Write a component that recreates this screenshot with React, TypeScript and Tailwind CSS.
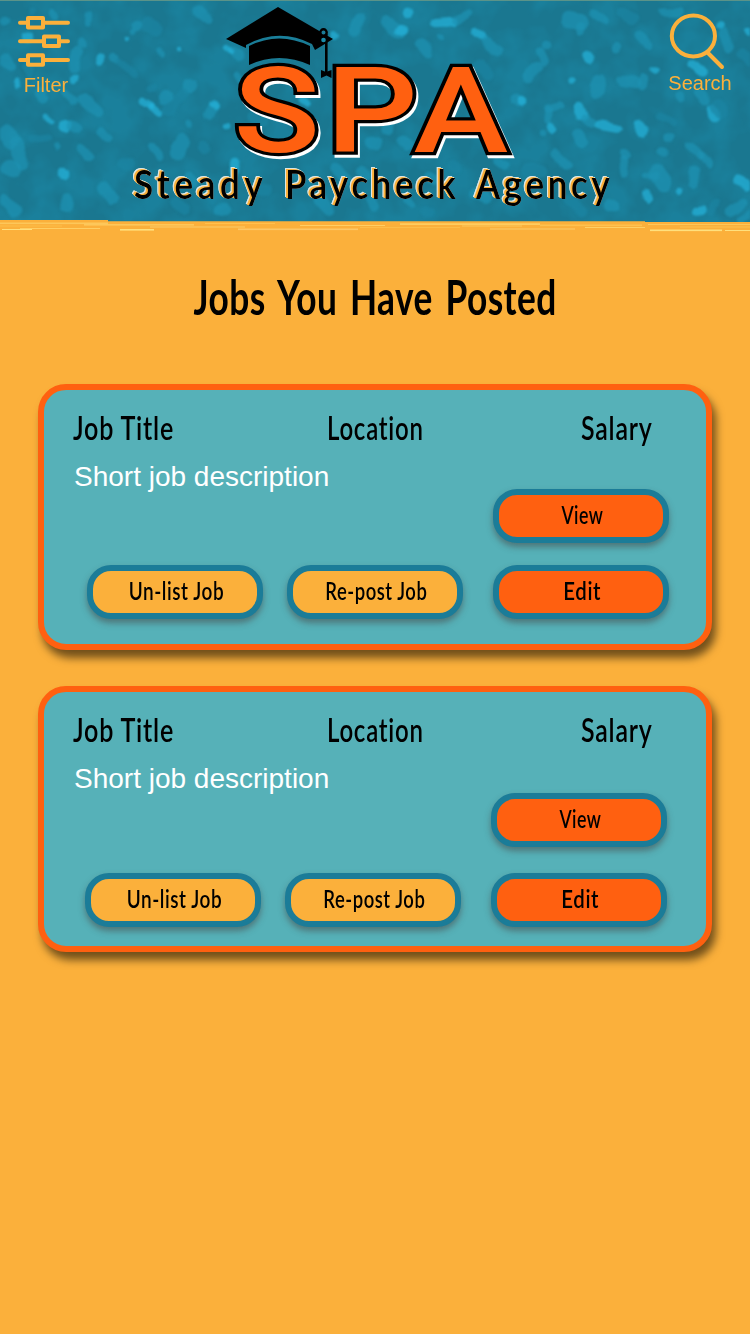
type Streak = [number, number, number, number, number, string];

const FAINT = '#1c85a3';
const MID = '#1e93b4';
const LIGHT = '#25b4dc';

const streaks: Streak[] = [
  [88, 14, 87, 24, 5, MID], [53, 13, 56, 15, 7, MID], [4, 21, 5, 22, 7, MID], [31, 12, 31, 12, 5, FAINT],
  [25, 35, 29, 36, 7, LIGHT], [81, 40, 82, 44, 6, MID], [99, 58, 99, 61, 8, LIGHT], [78, 52, 74, 68, 9, MID],
  [114, 58, 116, 59, 7, MID], [4, 60, 9, 66, 12, MID], [27, 66, 30, 71, 9, FAINT], [73, 79, 73, 79, 7, LIGHT],
  [66, 92, 74, 101, 7, MID], [41, 94, 43, 98, 9, MID], [16, 81, 18, 85, 3, LIGHT], [84, 98, 98, 111, 11, MID],
  [143, 101, 151, 105, 5, LIGHT], [152, 107, 159, 112, 6, LIGHT], [148, 24, 156, 28, 14, FAINT], [137, 26, 137, 26, 9, MID],
  [133, 32, 133, 32, 5, MID], [126, 40, 126, 40, 3, LIGHT], [198, 11, 206, 18, 10, MID], [120, 62, 134, 73, 6, FAINT],
  [159, 49, 161, 53, 4, MID], [179, 50, 179, 50, 3, LIGHT], [190, 85, 190, 85, 13, MID], [183, 92, 168, 110, 10, FAINT],
  [165, 96, 165, 98, 11, MID], [214, 108, 207, 116, 9, MID], [190, 124, 190, 124, 6, MID], [151, 89, 151, 89, 6, FAINT],
  [7, 131, 10, 140, 16, MID], [15, 145, 23, 163, 12, MID], [10, 168, 14, 170, 17, MID], [62, 126, 66, 127, 10, LIGHT],
  [71, 127, 76, 130, 8, MID], [46, 117, 50, 121, 3, LIGHT], [101, 132, 107, 138, 6, MID], [30, 140, 47, 138, 7, FAINT],
  [56, 146, 57, 148, 4, MID], [81, 148, 87, 158, 9, MID], [153, 147, 159, 157, 7, MID], [182, 140, 178, 153, 13, MID],
  [203, 147, 205, 149, 9, FAINT], [123, 163, 129, 164, 10, FAINT], [63, 174, 64, 175, 9, LIGHT], [67, 201, 66, 204, 12, MID],
  [103, 187, 113, 199, 9, MID], [4, 200, 15, 212, 9, MID], [176, 205, 184, 208, 11, FAINT], [189, 178, 192, 181, 9, MID],
  [211, 198, 214, 195, 9, FAINT], [234, 52, 237, 54, 9, MID], [227, 50, 230, 51, 5, LIGHT], [214, 104, 216, 107, 6, LIGHT],
  [360, 19, 354, 31, 10, MID], [408, 12, 408, 12, 7, LIGHT], [385, 21, 401, 33, 9, MID], [401, 30, 403, 31, 9, LIGHT],
  [436, 22, 454, 21, 7, LIGHT], [457, 19, 467, 14, 8, MID], [420, 42, 427, 52, 9, MID], [333, 35, 334, 36, 6, LIGHT],
  [475, 34, 481, 36, 9, LIGHT], [486, 42, 498, 50, 9, MID], [440, 38, 440, 38, 6, MID], [480, 64, 487, 75, 10, FAINT],
  [515, 98, 521, 102, 11, MID], [226, 126, 226, 126, 5, LIGHT], [239, 75, 241, 79, 5, MID], [253, 117, 263, 121, 10, FAINT],
  [293, 141, 308, 127, 9, MID], [302, 101, 306, 105, 6, LIGHT], [389, 113, 387, 130, 10, MID], [401, 141, 408, 146, 8, MID],
  [371, 142, 376, 143, 11, MID], [234, 165, 235, 170, 9, LIGHT], [219, 209, 225, 208, 11, MID], [255, 187, 267, 190, 10, FAINT],
  [335, 167, 346, 180, 9, MID], [361, 171, 367, 174, 9, MID], [293, 174, 311, 183, 9, FAINT], [319, 199, 329, 210, 10, MID],
  [372, 201, 374, 206, 10, MID], [429, 176, 435, 180, 9, MID], [453, 166, 455, 168, 9, FAINT], [475, 193, 487, 197, 10, MID],
  [425, 209, 430, 212, 8, FAINT], [498, 161, 505, 166, 8, MID], [500, 139, 505, 148, 8, FAINT], [408, 202, 410, 205, 6, MID],
  [568, 20, 580, 22, 15, MID], [579, 28, 579, 31, 8, MID], [595, 13, 602, 20, 8, MID], [623, 12, 632, 18, 9, FAINT],
  [665, 13, 679, 13, 6, MID], [640, 36, 648, 45, 9, MID], [547, 45, 547, 45, 7, MID], [540, 52, 544, 61, 8, MID],
  [536, 66, 528, 78, 9, MID], [588, 55, 590, 58, 8, LIGHT], [616, 48, 616, 48, 9, MID], [572, 80, 572, 80, 6, LIGHT],
  [599, 80, 597, 91, 12, MID], [653, 70, 654, 70, 6, LIGHT], [622, 81, 635, 83, 9, MID], [641, 85, 644, 80, 7, MID],
  [720, 26, 720, 26, 6, LIGHT], [723, 33, 729, 47, 8, MID], [748, 30, 749, 32, 6, LIGHT], [692, 64, 703, 72, 8, LIGHT],
  [698, 91, 705, 102, 7, MID], [713, 110, 714, 117, 9, LIGHT], [679, 96, 680, 97, 9, MID], [523, 100, 523, 101, 9, LIGHT],
  [548, 109, 559, 106, 6, MID], [549, 111, 548, 121, 6, MID], [551, 128, 553, 130, 7, LIGHT], [579, 108, 582, 115, 9, LIGHT],
  [586, 119, 593, 124, 8, MID], [600, 125, 616, 128, 8, LIGHT], [638, 125, 643, 131, 9, LIGHT], [668, 137, 670, 137, 6, MID],
  [660, 117, 672, 122, 7, FAINT], [578, 135, 582, 142, 11, MID], [625, 153, 625, 154, 9, MID], [623, 159, 625, 172, 6, MID],
  [663, 152, 663, 152, 8, MID], [555, 154, 566, 165, 8, MID], [690, 147, 700, 154, 7, MID], [702, 154, 708, 164, 6, MID],
  [657, 173, 664, 183, 15, MID], [645, 175, 655, 175, 5, MID], [695, 171, 692, 185, 9, MID], [680, 192, 680, 192, 5, LIGHT],
  [645, 193, 650, 200, 6, LIGHT], [609, 206, 614, 206, 9, MID], [568, 200, 582, 212, 9, FAINT], [529, 168, 540, 172, 11, FAINT],
  [697, 211, 702, 210, 8, LIGHT], [738, 181, 747, 185, 8, LIGHT], [718, 107, 720, 110, 14, FAINT], [741, 54, 749, 61, 10, FAINT],
  [716, 203, 711, 213, 7, FAINT], [730, 213, 743, 202, 7, MID], [740, 219, 749, 214, 7, MID], [543, 133, 543, 133, 5, MID],
];

const brushLines: [number, number, number, string][] = [
  [0, 223, 108, '#fdc75a'], [0, 226, 62, '#fdbd49'], [20, 228.5, 80, '#ffce62'], [84, 224.5, 110, '#fdc75a'],
  [150, 227, 95, '#fccb68'], [205, 223.5, 70, '#ffc14e'], [238, 229, 120, '#fdc766'], [300, 225.5, 85, '#ffce62'],
  [360, 227.5, 100, '#fdbd49'], [400, 223.8, 140, '#ffd064'], [462, 226, 60, '#fdc75a'], [490, 229, 85, '#fdcb6b'],
  [540, 225, 102, '#ffc14e'], [585, 227.5, 60, '#ffd064'], [648, 224.5, 102, '#fdc75a'], [650, 230, 72, '#ffe07d'],
  [680, 227, 70, '#ffc14e'], [2, 229.5, 30, '#ffe07d'], [120, 229.5, 34, '#ffe07d'], [725, 230.5, 25, '#ffe07d'],
];

const letters = [
  { ch: 'S', x: 233.5, sx: 1.2 },
  { ch: 'P', x: 326, sx: 1.21 },
  { ch: 'A', x: 413.5, sx: 1.2 },
];

const tagline = [
  { word: 'Steady', x: 134, width: 129 },
  { word: 'Paycheck', x: 285, width: 171 },
  { word: 'Agency', x: 476, width: 134 },
];

function WaterBackdrop() {
  return (
    <svg className="absolute inset-0 h-[234px] w-[750px]" viewBox="0 0 750 234" aria-hidden="true">
      <defs>
        <filter id="organic" x="0" y="0" width="750" height="234" filterUnits="userSpaceOnUse" colorInterpolationFilters="sRGB">
          <feTurbulence type="fractalNoise" baseFrequency="0.06" numOctaves="1" seed="4" />
          <feDisplacementMap in="SourceGraphic" scale="9" xChannelSelector="R" yChannelSelector="G" />
          <feGaussianBlur stdDeviation="0.8" />
        </filter>
        <filter id="mottle" x="0" y="0" width="750" height="222" filterUnits="userSpaceOnUse" colorInterpolationFilters="sRGB">
          <feTurbulence type="fractalNoise" baseFrequency="0.03" numOctaves="3" seed="9" />
          <feColorMatrix values="0 0 0 0 0.11  0 0 0 0 0.55  0 0 0 0 0.67  3 0 0 0 -1.1" />
        </filter>
      </defs>
      <rect width="750" height="222" fill="#1a7790" />
      <rect width="750" height="222" filter="url(#mottle)" opacity="0.45" />
      <g filter="url(#organic)" strokeLinecap="round">
        {streaks.map(([x1, y1, x2, y2, w, c], i) => (
          <line key={i} x1={x1} y1={y1} x2={x2 + 0.1} y2={y2} strokeWidth={w + 1.5} stroke={c} opacity={0.7} />
        ))}
      </g>
      <rect width="750" height="1" fill="#5b9389" />
      <path d="M0 220H108V221.3H645V222H750V234H0Z" fill="#fbb03b" />
      {brushLines.map(([x, y, w, c], i) => (
        <rect key={i} x={x} y={y - 0.5} width={w} height={i % 3 === 0 ? 1.6 : 1} fill={c} />
      ))}
    </svg>
  );
}

function Logo() {
  return (
    <svg className="ml-[33px] mr-[25px] h-[222px] w-[500px] shrink-0" viewBox="125 0 500 222" role="img" aria-label="SPA">
      <g fill="#000">
        <path d="M278 7L333 39L315 50L312 44Q279 27 246 45V48L226 39Z" />
        <path d="M249 46Q279 31 310 46V65Q279 51 249 65Z" />
        <path d="M326.3 34V72" stroke="#000" strokeWidth="2.6" />
        <circle cx="323.5" cy="32.5" r="3.2" fill="#1b7c98" stroke="#000" strokeWidth="2.4" />
        <circle cx="323.5" cy="40" r="3" fill="#1b8caa" stroke="#000" strokeWidth="1.4" />
        <path d="M321 70L326 72L331.5 70V78L326.5 75.5L321 78Z" />
      </g>
      <g className="font-['Roboto',sans-serif] font-[490] [filter:drop-shadow(2.6px_3.8px_0_#fff)] [paint-order:stroke]" fontSize="119" fill="#ff6010" stroke="#000" strokeWidth="6.4" strokeLinejoin="miter">
        {letters.map((l) => (
          <text key={l.ch} transform={`translate(${l.x} 152.4) scale(${l.sx} 1)`}>{l.ch}</text>
        ))}
      </g>
      <g className="font-['Lato',sans-serif] font-semibold [filter:drop-shadow(-2px_-1px_0_#fbb03b)_drop-shadow(0.8px_0.8px_0_#dfe7e3)_drop-shadow(-0.8px_-0.8px_0_#dfe7e3)]" fontSize="41" fill="#000">
        {tagline.map((t) => (
          <text key={t.word} transform={`translate(${t.x} 199) scale(0.86 1)`} textLength={t.width / 0.86}>{t.word}</text>
        ))}
      </g>
    </svg>
  );
}

function Header() {
  return (
    <header className="relative h-[222px]">
      <WaterBackdrop />
      <div className="relative flex h-full font-['Liberation_Sans',sans-serif] text-[20px] leading-[24px] text-[#fbb03b]">
        <button className="flex h-[98px] w-[92px] shrink-0 flex-col items-center pt-[15px]">
          <svg className="ml-[-4px] h-[54px] w-[54px]" viewBox="0 0 54 54" fill="none" stroke="#fbb03b" strokeWidth="4" strokeLinecap="round">
            <path d="M3 7.7H11M27 7.7H51M3 26.3H27M44 26.3H51M3 45H11M27 45H51" />
            <g strokeLinejoin="round">
              <rect x="11" y="3" width="15" height="9.5" />
              <rect x="27" y="21.6" width="15" height="9.5" />
              <rect x="11" y="40.2" width="15" height="9.5" />
            </g>
          </svg>
          <span className="mt-[4px]">Filter</span>
        </button>
        <Logo />
        <button className="flex h-[98px] w-[100px] shrink-0 flex-col items-center pt-[12px]">
          <svg className="ml-[-8px] h-[59px] w-[58px]" viewBox="0 0 58 59" fill="none" stroke="#fbb03b" strokeWidth="4" strokeLinecap="round">
            <ellipse cx="26.4" cy="24" rx="21.6" ry="20.4" />
            <path d="M41 41L55 55" />
          </svg>
          <span>Search</span>
        </button>
      </div>
    </header>
  );
}

const buttonBase =
  "flex h-[54px] w-[176px] items-center justify-center rounded-[24px] border-[6px] border-[#1b7c98] pb-[3px] pl-[2px] font-['Lato',sans-serif] text-[24px] font-semibold leading-[30px] tracking-[0.7px] text-black shadow-[0_4px_6px_rgba(70,60,60,0.5)]";

function ActionButton({ label, primary, squeeze }: { label: string; primary?: boolean; squeeze: string }) {
  return (
    <button className={`${buttonBase} ${primary ? 'bg-[#ff6010]' : 'bg-[#fbb03b]'}`}>
      <span className={`inline-block whitespace-nowrap ${squeeze}`}>{label}</span>
    </button>
  );
}

function JobCard({ actions, bottom }: { actions: string; bottom: string }) {
  return (
    <article className="flex h-[266px] w-[674px] flex-col rounded-[28px] border-[6px] border-[#ff6010] bg-[#56b1b8] shadow-[4px_8px_8px_rgba(0,0,0,0.55)]">
      <div className="grid grid-cols-[254px_254px_1fr] pl-[29px] pt-[18px] font-['Lato',sans-serif] text-[32px] font-semibold leading-[40px] tracking-[1px] text-black [font-variant-ligatures:none]">
        <h2 className="origin-left scale-x-[0.785] whitespace-nowrap">Job Title</h2>
        <h2 className="origin-left scale-x-[0.75] whitespace-nowrap">Location</h2>
        <h2 className="origin-left scale-x-[0.78] whitespace-nowrap">Salary</h2>
      </div>
      <p className="mt-[13px] pl-[30px] font-['Liberation_Sans',sans-serif] text-[28px] leading-[32px] text-white">Short job description</p>
      <div className={`flex flex-col items-end ${actions}`}>
        <ActionButton label="View" primary squeeze="scale-x-[0.74]" />
        <div className={`flex ${bottom}`}>
          <ActionButton label="Un-list Job" squeeze="scale-x-[0.79]" />
          <div className="ml-[24px] mr-[30px]">
            <ActionButton label="Re-post Job" squeeze="scale-x-[0.77]" />
          </div>
          <ActionButton label="Edit" primary squeeze="scale-x-[0.85]" />
        </div>
      </div>
    </article>
  );
}

export default function App() {
  return (
    <div className="h-[1334px] w-[750px] overflow-hidden bg-[#fbb03b]">
      <Header />
      <main className="flex flex-col items-center">
        <h1 className="mt-[45px] h-[60px] origin-center scale-x-[0.735] whitespace-nowrap font-['Lato',sans-serif] text-[48px] font-bold leading-[60px] tracking-[0.6px] text-black [word-spacing:5px]">
          Jobs You Have Posted
        </h1>
        <div className="mt-[57px] flex flex-col gap-[36px]">
          <JobCard actions="mt-[-4px] pr-[37px]" bottom="mt-[22px]" />
          <JobCard actions="mt-[-2px] pr-[39px]" bottom="mt-[26px]" />
        </div>
      </main>
    </div>
  );
}
